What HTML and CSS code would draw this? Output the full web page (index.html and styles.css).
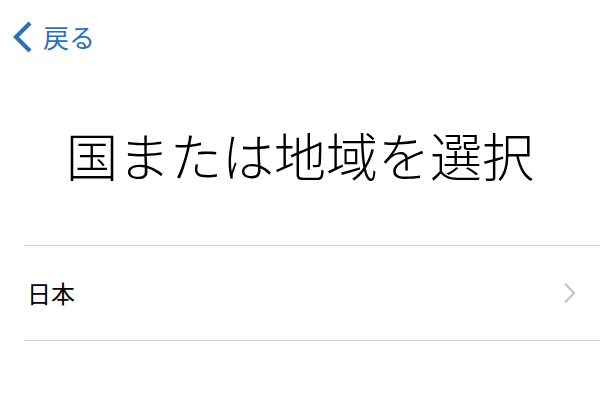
FILE: index.html
```html
<!DOCTYPE html>
<html lang="ja">
<head>
<meta charset="utf-8">
<title>国または地域を選択</title>
<link rel="stylesheet" href="styles.css">
</head>
<body>
<div class="screen">
  <header class="nav">
    <a class="back" href="#">
      <svg class="back-icon" width="22" height="34" viewBox="0 0 22 34" aria-hidden="true">
        <polyline points="18,3 4,17 18,31" fill="none" stroke="currentColor" stroke-width="4.2" stroke-linecap="butt" stroke-linejoin="miter"/>
      </svg>
      <span class="back-label">戻る</span>
    </a>
  </header>
  <h1 class="title">国または地域を選択</h1>
  <ul class="list">
    <li class="row">
      <span class="row-label">日本</span>
      <svg class="row-chevron" width="14" height="22" viewBox="0 0 14 22" aria-hidden="true">
        <polyline points="2,1.5 11,11 2,20.5" fill="none" stroke="currentColor" stroke-width="2.2"/>
      </svg>
    </li>
  </ul>
</div>
</body>
</html>
```

FILE: styles.css
```css
html, body {
  margin: 0;
  padding: 0;
  background: #ffffff;
}

body {
  font-family: "Noto Sans CJK JP", "Noto Sans", sans-serif;
  color: #000000;
}

.screen {
  width: 600px;
  height: 400px;
  overflow: hidden;
  display: flex;
  flex-direction: column;
}

.nav {
  height: 74px;
  display: flex;
  align-items: center;
  padding-left: 12px;
}

.back {
  display: flex;
  align-items: center;
  gap: 9px;
  color: #2c6fbb;
  text-decoration: none;
}

.back-icon {
  display: block;
}

.back-label {
  font-size: 26px;
  line-height: 1;
  font-weight: 400;
}

.title {
  margin: 55px 0 64px;
  font-size: 52px;
  line-height: 52px;
  font-weight: 300;
  text-align: center;
  letter-spacing: 0;
}

.list {
  list-style: none;
  margin: 0 0 0 24px;
  padding: 0;
  border-top: 1px solid #d3d3d6;
}

.row {
  height: 94px;
  display: flex;
  align-items: center;
  justify-content: space-between;
  padding: 0 23px 0 3px;
  border-bottom: 1px solid #d3d3d6;
}

.row-label {
  font-size: 24px;
  line-height: 1;
}

.row-chevron {
  display: block;
  color: #c4c4c8;
}
```
